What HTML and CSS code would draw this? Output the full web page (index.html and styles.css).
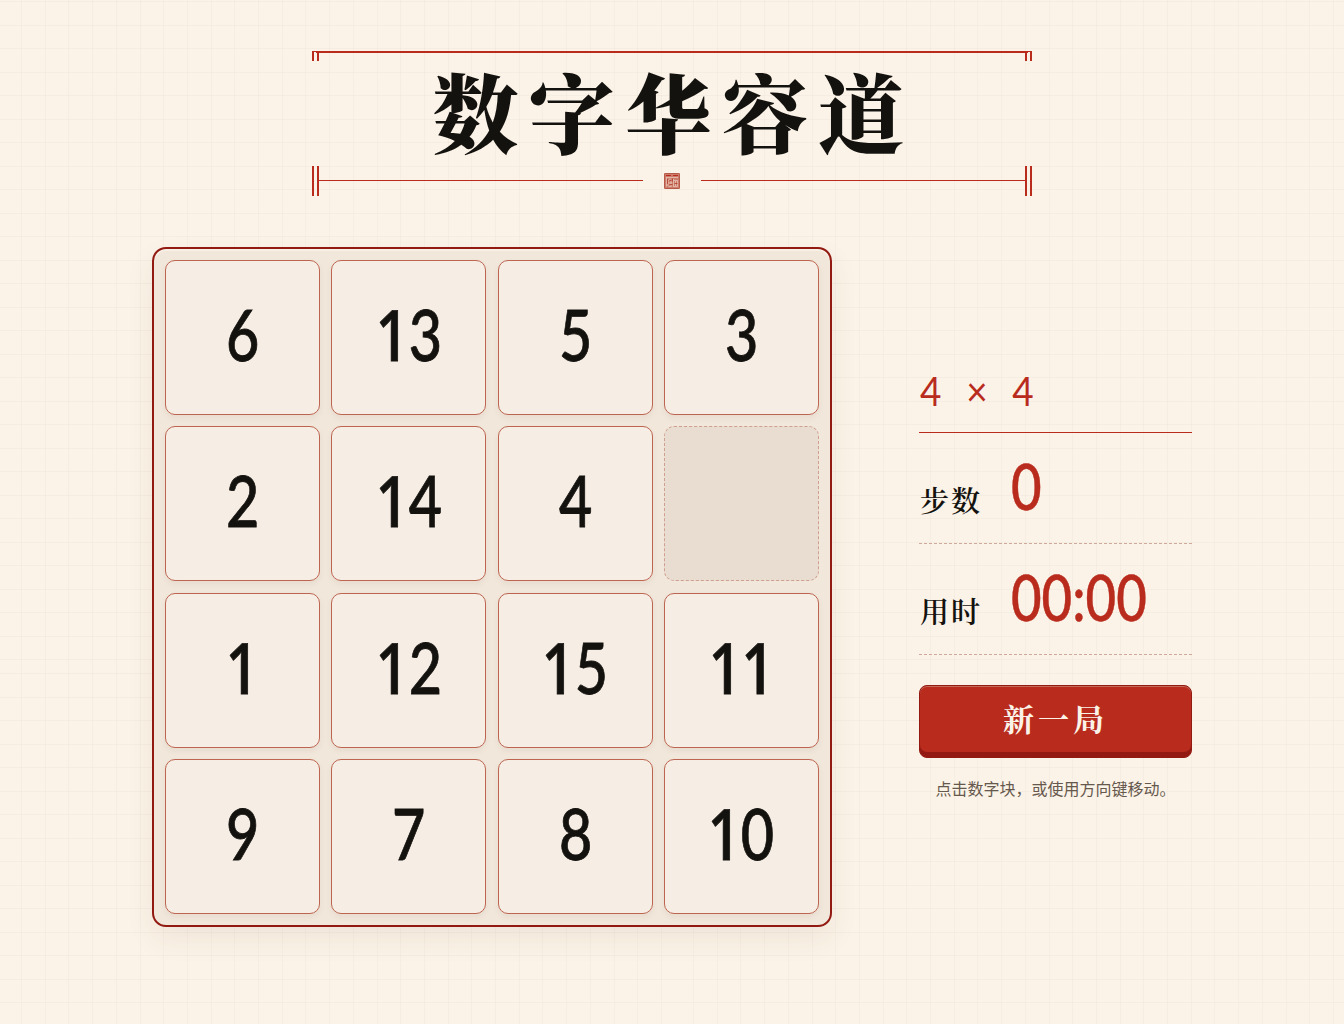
FILE: index.html
```html
<!DOCTYPE html>
<html lang="zh-CN">
<head>
<meta charset="UTF-8">
<title>数字华容道</title>
<link rel="stylesheet" href="styles.css">
</head>
<body>
<main class="page">
  <header class="masthead">
    <div class="rule-top"></div>
    <h1 class="title">数字华容道</h1>
    <div class="rule-bottom">
      <i class="post"></i><i class="line"></i>
      <svg class="seal" width="18" height="18" viewBox="0 0 18 18">
        <rect x="1" y="1" width="16" height="16" rx="1" fill="#cc7c6b"/>
        <rect x="1.500" y="1.500" width="15" height="15" rx="1" fill="none" stroke="#b85a49"/>
        <path d="M3 3.500h5M10 3.500h5" stroke="#b82b1d" stroke-width="1.200"/>
        <path d="M3 5.500h12M3.500 5.500v9M7 6.500L5 9v5M5 11h4M8 7.500v7M10.500 7v8M10.500 8.500h4v6h-4M12.500 9v5M5.500 14.500h3" fill="none" stroke="#e9c4b5" stroke-width=".8"/>
        <path d="M6.500 8.500h2M6.500 12.500h3M11.500 11.500h3M9.500 6.500v3M4.500 7v5" fill="none" stroke="#b33a2b" stroke-width=".8"/>
      </svg>
      <i class="line"></i><i class="post"></i>
    </div>
  </header>
  <div class="game">
    <section class="board">
      <button class="tile"><span>6</span></button>
      <button class="tile"><span><b>1</b>3</span></button>
      <button class="tile"><span>5</span></button>
      <button class="tile"><span>3</span></button>
      <button class="tile"><span>2</span></button>
      <button class="tile"><span><b>1</b>4</span></button>
      <button class="tile"><span>4</span></button>
      <div class="tile empty"></div>
      <button class="tile"><span><b>1</b></span></button>
      <button class="tile"><span><b>1</b>2</span></button>
      <button class="tile"><span><b>1</b>5</span></button>
      <button class="tile"><span><b>11</b></span></button>
      <button class="tile"><span>9</span></button>
      <button class="tile"><span>7</span></button>
      <button class="tile"><span>8</span></button>
      <button class="tile"><span><b>1</b>0</span></button>
    </section>
    <aside class="panel">
      <div class="size"><span>4 × 4</span></div>
      <div class="stat"><span class="label">步数</span><span class="value">0</span></div>
      <div class="stat"><span class="label">用时</span><span class="value">00:00</span></div>
      <button class="restart">新一局</button>
      <p class="hint">点击数字块，或使用方向键移动。</p>
    </aside>
  </div>
</main>
</body>
</html>
```
FILE: styles.css
```css
:root {
  --red: #b82b1d;
  --deep: #921a12;
  --ink: #14120f;
  --song: "Noto Serif CJK SC", "Songti SC", "Noto Sans CJK SC", serif;
}
* { box-sizing: border-box; }
body {
  margin: 0;
  height: 1024px;
  overflow: hidden;
  color: var(--ink);
  font-family: "Noto Sans CJK SC", sans-serif;
  background-color: #fbf3e8;
  background-image:
    repeating-linear-gradient(90deg, transparent 0 21px, rgba(120, 95, 70, .035) 21px 22px, transparent 22px 23.7px),
    repeating-linear-gradient(180deg, transparent 0 1px, rgba(120, 95, 70, .045) 1px 2px, transparent 2px 23.5px);
  background-size: 672px 672px;
}
button { font: inherit; color: inherit; padding: 0; }
.page { display: flex; flex-direction: column; align-items: center; padding-top: 51px; }
.masthead { width: 720px; height: 145px; display: flex; flex-direction: column; }
.rule-top {
  height: 10px;
  background:
    linear-gradient(var(--red), var(--red)) 4px 0 / 712px 2px no-repeat,
    linear-gradient(var(--red), var(--red)) 0 0 / 720px 1px no-repeat,
    linear-gradient(var(--red), var(--red)) 0 0 / 2px 10px no-repeat,
    linear-gradient(var(--red), var(--red)) 5px 0 / 2px 10px no-repeat,
    linear-gradient(var(--red), var(--red)) 713px 0 / 2px 10px no-repeat,
    linear-gradient(var(--red), var(--red)) 718px 0 / 2px 10px no-repeat;
}
.title {
  margin: 0;
  height: 105px;
  padding-left: 3px;
  text-align: center;
  font: 900 86px/98px var(--song);
  letter-spacing: 10.5px;
}
.rule-bottom { display: flex; align-items: center; height: 30px; }
.post { width: 7px; height: 30px; border: solid var(--red); border-width: 0 2px; }
.line { width: 324px; height: 1px; margin-top: -1px; background: var(--red); }
.seal { margin: 0 20px; }
.game { display: flex; align-items: center; gap: 87px; width: 1040px; margin-top: 51px; }
.board {
  width: 680px;
  height: 680px;
  display: grid;
  grid-template: repeat(4, 155px) / repeat(4, 155px);
  gap: 11.3px;
  padding: 11px;
  border: 2px solid var(--deep);
  border-radius: 14px;
  background: #f1e7db;
  box-shadow: 0 12px 28px rgba(110, 65, 40, .08), inset 0 2px 0 #f9f0e5;
}
.tile {
  display: flex;
  align-items: center;
  justify-content: center;
  border: 1px solid #bd6550;
  border-radius: 10px;
  background: #f6eee4;
  box-shadow: 0 3px 6px rgba(120, 65, 40, .07);
  font: 500 71px/1 Lato, sans-serif;
}
.tile span { transform: translateY(-4px) scaleX(.81); -webkit-text-stroke: .8px; }
.tile b { font-family: "Open Sans", sans-serif; font-weight: 600; line-height: 0; }
.empty { background: #e9dcd0; border: 1px dashed #cfa090; box-shadow: none; }
.panel { width: 273px; display: flex; flex-direction: column; }
.size {
  height: 62px;
  border-bottom: 1px solid var(--red);
  color: var(--red);
  font: 400 41px/40px Lato, sans-serif;
}
.size span { display: inline-block; margin-left: 1px; transform: scaleX(.9); transform-origin: left; letter-spacing: 8.5px; }
.stat {
  height: 111px;
  display: flex;
  align-items: baseline;
  gap: 29px;
  padding: 16px 0 0 1px;
  border-bottom: 1px dashed #d0a99d;
}
.label { flex: none; font: 600 29px/40px var(--song); letter-spacing: 2px; }
.value {
  color: var(--red);
  font: 500 64px/78px Lato, sans-serif;
  transform: translateY(-2px) scaleX(.825);
  transform-origin: left;
  -webkit-text-stroke: .5px;
}
.restart {
  height: 73px;
  margin-top: 30px;
  padding-bottom: 9px;
  border: 1px solid var(--deep);
  border-radius: 8px;
  background: var(--red);
  box-shadow: inset 0 -5px 0 var(--deep), inset 0 1px 0 #c56a58;
  color: #fbf3e8;
  font: 700 31px/1 var(--song);
  letter-spacing: 4px;
}
.hint { margin: 18px 0 3px; text-align: center; font-size: 16px; line-height: 24px; color: #66584d; white-space: nowrap; }
```
